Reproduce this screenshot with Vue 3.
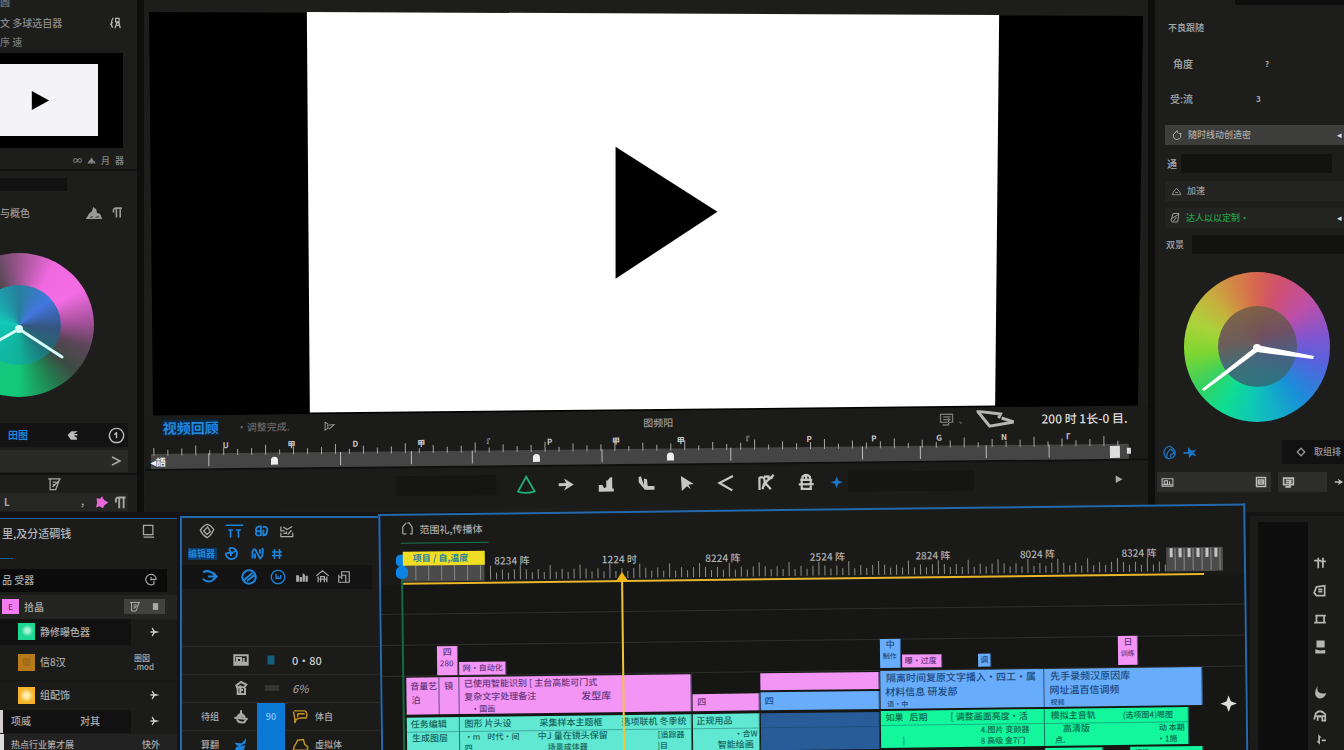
<script setup>
import { h, ref } from 'vue'

const shapes = {
  play: ['f', 'M4 2 L22 12 L4 22Z'],
  tri: ['s', 'M12 3 L21 19 Q12 22 3 19Z'],
  mount: ['f', 'M1 20 L6 12 L9 10 L11 4 L15 7 L16 12 L20 13 L23 20Z M6 18h4v-2z M13 18h5v-2z'],
  para: ['s', 'M5 12 Q3 4 9 4 H20 M10 4V21 M17 4V21'],
  person: ['s', 'M9 3 Q3 12 8 20 M8 11 L4 15 M13 4h6v6h-6z M12 21 L15 12 H19 L21 21 M15 16h4'],
  hand: ['f', 'M3 11 L10 4 H22 L14 9 H21 V12 H14 L20 16 V20 H9Z'],
  clock: ['s', 'M12 2a10 10 0 1 0 .1 0 M12 7v9 M12 8l-3 3'],
  chev: ['s', 'M4 4 L20 12 L4 20'],
  fork: ['f', 'M6 1L11 9L23 12L11 15L6 23L4 20L8 14H1V10H8L4 4Z'],
  less: ['s', 'M21 3 L3 12 L20 22'],
  note: ['s', 'M2 3H22 M5 3V20H14L20 4 M9 8l6 0 M9 12h5 M9 16l9-9'],
  splat: ['f', 'M4 5 L10 6 L13 2 L16 8 L23 12 L17 16 L14 21 L9 18 L3 20 L5 13Z'],
  monitor: ['s', 'M4 2H19V17H4Z M4 21H21'],
  lens: ['s', 'M18 18A9 9 0 1 1 21 11 M12 11H21 M12 7v6 M17 13v5'],
  diamond: ['s', 'M12 2 Q18 3 22 10 Q18 19 12 22 Q5 18 2 11 Q6 4 12 2Z M13 6L17 13L12 17L7 12Z'],
  tt: ['s', 'M1 4H23 M7 10V20 M4 10h6 M17 10V20 M14 10h6'],
  magnet: ['s', 'M3 11Q3 3 11 4V19 M10 12Q4 9 3 15Q3 19 9 18 M14 5Q23 3 21 12 Q20 18 15 18 V9'],
  graph: ['s', 'M3 4V11H9 M3 14V20H22V14 M7 5L13 9L21 4 M7 15h4 M14 17L20 10 M12 12v4'],
  swirl: ['s', 'M8 4A9 9 0 1 1 3 11 M8 5L12 12L18 8 M4 11h7v5'],
  wave: ['s', 'M4 20V9Q7 1 11 10L16 20Q22 16 20 3 M16 5V12 M8 12V20'],
  hash: ['s', 'M7 2V22 M17 2V22 M2 8H22 M2 15H22'],
  loop: ['s', 'M3 6Q9 3 14 6Q21 8 20 12 Q18 18 12 19 Q5 19 3 15 M10 12H21 M17 8l5 4-5 5'],
  slash: ['s', 'M12 2a10 10 0 1 0 .1 0 M5 16L17 6 M9 18L20 9'],
  clip: ['s', 'M12 2a10 10 0 1 0 .1 0 M9 7V14H16V9 M12 10v5'],
  bars: ['f', 'M2 9H7V20H2Z M8 12H12V20H8Z M13 5L17 8V20H13Z M18 10H22V20H18Z'],
  house: ['s', 'M2 11L12 3L22 11 M5 12V21 M19 12V21 M9 21V12H15V21 M7 16H18'],
  frame: ['s', 'M3 8V21H21V3H8V16 M8 9H15V21 M3 12h5'],
  folder: ['s', 'M2 5H22V19H2Z M6 9H12V15H6Z M16 9V15 M2 16H22'],
  film: ['f', 'M5 3H19V21H5Z'],
  cube: ['s', 'M5 8L12 3L20 7L17 11H6Z M7 12V21H18V12 M10 15h5 M11 8V21'],
  bot: ['s', 'M12 2V7 M6 13Q12 2 18 13 M2 13L22 15 M6 15Q7 21 17 20L20 15 M9 11h6'],
  blade: ['f', 'M2 9L14 10L21 2L20 10L9 16Z M5 16L20 13L17 21L3 22Z'],
  bubble: ['s', 'M3 4H18Q23 6 20 14H12L6 16L4 21V15L2 5 M8 8h10 M8 8v5'],
  cap: ['s', 'M2 20H22V15L18 12L16 5L8 6L5 12L3 15Z'],
  doc: ['s', 'M4 21V9L10 2 M12 2H15L20 9V21H16 M4 21H10'],
  arrow: ['f', 'M2 10H12L9 4L22 12L9 20L12 14H2Z'],
  steps: ['f', 'M2 13H7L9 17L12 16V7H14L17 3H20V18H22V22H2Z'],
  edge: ['f', 'M2 3L5 2L9 14L9 5L13 6L14 15H23V20H10L2 10Z'],
  cursor: ['f', 'M5 2L22 13L15 14L18 20L13 16L6 22Z'],
  cut: ['s', 'M3 5V22 M3 5H8 M9 4L10 13L22 2 M9 4H15V8 M9 13L7 21 M11 13L18 21 M9 17Q12 8 21 5'],
  lock: ['s', 'M7 9V5Q12 0 17 5V9 M4 9H20 M6 9V21H18V9 M2 15H22 M12 4V9'],
  spark: ['f', 'M12 1L15 9L23 12L15 15L12 23L9 15L1 12L9 9Z'],
  flag: ['s', 'M3 4V20L9 16L8 10L21 9L11 18 M3 4L9 8'],
  stack: ['s', 'M3 4H21V16H3Z M7 8H18 M7 12H18 M15 8V20H6'],
  pot: ['s', 'M5 10Q3 20 12 21Q22 19 19 10 M6 10L12 3L13 8 M15 9h6'],
  bell: ['s', 'M3 19H21L19 13L12 5L5 13Z M9 14h6'],
  disk: ['s', 'M8 3H20L17 20H6Q2 16 6 11Z M5 13L19 5 M9 18L15 10'],
  drop: ['s', 'M13 2Q4 3 3 12Q4 22 12 22Q22 20 21 11Q18 4 13 2Z M8 20Q6 12 15 6 M14 6L20 13L14 15V20'],
  star: ['f', 'M1 11H8L8 3L14 9L22 7L17 12L22 18L14 16L10 21L9 14H1Z'],
  square: ['s', 'M3 3H21V21H3Z M7 8H17V16H7Z M7 12H17'],
  pen: ['s', 'M2 8H14 M9 3V21 M17 3V20 M13 9H22'],
  box: ['s', 'M6 5L20 3V20H6L2 15Z M9 9H16 M9 13H16'],
  rail: ['s', 'M4 6H22 M2 18H22 M19 6V18 M6 6V18'],
  block: ['f', 'M6 1H20V13H6Z M4 16L12 18L21 17V23H4Z'],
  moon: ['f', 'M8 1Q4 17 23 14Q19 23 11 23Q-2 19 8 1Z'],
  ghost: ['s', 'M2 18L5 7Q13 0 21 9V20H16V13H8V20 M5 12H21'],
  sort: ['f', 'M9 2L15 8H12V20L6 14H9Z M15 11H22V14H15Z'],
  rhomb: ['s', 'M12 3L21 12L12 21L3 12Z'],
  nib: ['s', 'M22 8L24 4L1 1L13 16L37 12L25 8'],
}
const Icon = (p) => {
  const [k, d] = shapes[p.n]
  const nib = p.n === 'nib'
  return h('svg', {
    viewBox: nib ? '0 0 39 18' : '0 0 24 24', width: p.w || 14, height: nib ? 18 : p.w || 14, 'aria-hidden': 'true',
    fill: k === 'f' ? 'currentColor' : 'none', 'fill-rule': 'evenodd', stroke: k === 's' ? 'currentColor' : 'none',
    'stroke-width': p.sw || 2,
  }, [h('path', { d })])
}
Icon.props = ['n', 'w', 'sw']

const query = ref('品 受器')
const pct = (v, total) => (v / total) * 100 + '%'

const W = 867
const labels = [
  [114, '8234 阵'], [222, '1224 时'], [326, '8224 阵'], [431, '2524 阵'], [537, '2824 阵'], [642, '8024 阵'], [744, '8324 阵'],
]
const ticks = []
for (let i = 0; i < 114; i++) ticks.push({ x: 110 + i * 6, l: i % 5 === 0 ? 14 : i % 2 ? 7 : 10 })

const clips = [
  { x: 55, w: 21, y: 62, h: 29, c: 'pink', t: [[6, 1, '四', 9], [3, 12, '280', 8]] },
  { x: 77, w: 48, y: 78, h: 13, c: 'pink', t: [[4, 1, '网·自动化', 8]] },
  { x: 500, w: 21, y: 60, h: 29, c: 'blue', t: [[6, 1, '中'], [3, 12, '制作', 7]] },
  { x: 522, w: 41, y: 76, h: 13, c: 'pink', t: [[3, 1, '曝·过度', 8]] },
  { x: 599, w: 13, y: 76, h: 13, c: 'blue', t: [[2, 1, '调', 8]] },
  { x: 739, w: 21, y: 60, h: 29, c: 'pink', t: [[6, 1, '日'], [3, 12, '训练', 7]] },
  { x: 24, w: 33, y: 93, h: 37, c: 'pink', t: [[4, 4, '音量艺'], [5, 18, '泊']] },
  { x: 57, w: 20, y: 93, h: 37, c: 'pink', t: [[5, 4, '镜']] },
  { x: 77, w: 233, y: 93, h: 37, c: 'pink', t: [[5, 2, '已使用智能识别 [ 主台高能可门式', 9], [5, 15, '复杂文字处理备注', 9], [122, 15, '发型库', 10], [12, 27, '·国画', 8]] },
  { x: 311, w: 68, y: 113, h: 17, c: 'pink', t: [[5, 3, '四']] },
  { x: 380, w: 119, y: 93, h: 17, c: 'pink', t: [] },
  { x: 380, w: 119, y: 112, h: 18, c: 'blue', t: [[4, 4, '四']] },
  { x: 500, w: 165, y: 92, h: 38, c: 'blue', t: [[6, 2, '隔离时间复原文字播入·四工·属', 10], [5, 16, '材料信息 研发部', 10], [7, 28, '语·中', 7]] },
  { x: 665, w: 159, y: 92, h: 38, c: 'blue', t: [[6, 2, '先手录频汉原因库', 10], [5, 16, '网址温百信调频', 10], [6, 28, '视频', 7]] },
  { x: 24, w: 53, y: 133, h: 38, c: 'cyan', t: [[4, 2, '任务编辑'], [5, 16, '生成图层']] },
  { x: 77, w: 233, y: 133, h: 38, c: 'cyan', t: [[5, 2, '图形 片头设'], [80, 2, '采集样本主题框'], [162, 2, '选项联机 冬季统'], [5, 15, '·m    时代·间', 8], [78, 15, '中J 量在镜头保留', 9], [198, 15, '[追踪器', 8], [5, 26, '四', 8], [88, 26, '场景成体器', 8], [198, 26, '|目', 8]] },
  { x: 311, w: 68, y: 133, h: 38, c: 'cyan', t: [[4, 2, '正规用品'], [42, 15, '·合W', 8], [25, 26, '智能绘画', 9]] },
  { x: 380, w: 119, y: 133, h: 37, c: 'navy', t: [] },
  { x: 500, w: 165, y: 132, h: 37, c: 'green', t: [[5, 2, '如果   后期'], [70, 2, '[ 调整画面亮度·活'], [100, 15, '4.图片 变颜器', 8], [22, 25, '|', 8], [100, 26, '8 高级 金7门', 8]] },
  { x: 665, w: 145, y: 132, h: 37, c: 'green', t: [[6, 2, '模拟主音轨'], [78, 2, '(选项图4)嗯图', 8], [18, 15, '高清版'], [114, 15, '动 本期', 8], [10, 26, '点.', 8], [112, 26, '·1施', 8]] },
  { x: 403, w: 97, y: 171, h: 30, c: 'green', t: [] },
  { x: 665, w: 58, y: 171, h: 30, c: 'green', t: [[5, 0, '项目 —', 7]] },
  { x: 750, w: 74, y: 171, h: 30, c: 'green', t: [[5, 0, '视频', 7]] },
]

const M = 1005
const small = []
for (let i = 0; i < 70; i++) small.push({ x: 4 + i * 14, l: [6, 4, 5, 8, 3][i % 5] })
const marks = ['U', '甲', 'D', '甲', '『', 'P', '甲', '甲', '『', 'P', 'P', 'G', 'N', 'Γ'].map((s, i) => ({ s, x: 78 + i * 65 }))
const majors = [64, 196, 267, 328, 458, 587, 719, 777, 843, 906]
const pins = [126, 389, 523]
const transport = [['tri', '三角标记'], ['arrow', '前进'], ['steps', '音量'], ['edge', '入点'], ['cursor', '播放'], ['less', '后退'], ['cut', '剪切'], ['lock', '锁定']]
const strip = [['pen', 0], ['box', 0], ['rail', 0], ['block', 0], ['moon', 1], ['ghost', 0], ['sort', 0]]
</script>

<template>
  <div class="app">
    <div class="upper">
      <aside class="scope">
        <div class="cut">圆</div>
        <div class="srow top"><span>文 多球选自器</span><button aria-label="人物"><Icon n="person" w="14" /></button></div>
        <div class="sub">序 速</div>
        <div class="thumb"><div class="paper"><Icon n="play" w="23" /></div></div>
        <div class="minis"><span>∞</span><Icon n="mount" w="9" /><span>月</span><span>器</span></div>
        <div class="selrow"><select aria-label="范围"><option></option></select></div>
        <div class="srow tone"><span>与概色</span><span class="pair"><Icon n="mount" w="18" /><Icon n="para" w="13" sw="3" /></span></div>
        <div class="wheelbox"><div class="wheel lw"><div class="core"></div>
          <svg viewBox="0 0 150 144" aria-hidden="true"><path d="M26 104L75 76L118 104" fill="none" stroke="#d8fff8" stroke-width="3" stroke-linecap="round" /><circle cx="75" cy="76" r="4" fill="#d8fff8" /></svg>
        </div></div>
        <div class="tabs"><a href="#">田图</a><button aria-label="手形"><Icon n="hand" w="13" /></button><button aria-label="时间"><Icon n="clock" w="17" /></button></div>
        <div class="more"><button aria-label="展开"><Icon n="chev" w="12" sw="3" /></button></div>
        <div class="noter"><Icon n="note" w="15" /></div>
        <div class="last"><b>L</b><span>，</span><Icon n="splat" w="15" class="mag" /><Icon n="para" w="15" sw="3" /></div>
      </aside>

      <main class="monitor">
        <svg class="screen" viewBox="0 0 1000 404" preserveAspectRatio="none" role="img" aria-label="预览画面">
          <path d="M1 0L996 4L991 395L5 404Z" fill="#000" />
          <path d="M159 0L852 3L848 394L162 401Z" fill="#fff" />
          <path d="M468 135L570 200L468 267Z" fill="#000" />
        </svg>
        <div class="deck">
          <div class="info">
            <div class="il"><strong>视频回顾</strong><span class="dim">·调整完成.</span><Icon n="flag" w="12" class="flag" /></div>
            <span class="mid">图频阳</span>
            <div class="ir"><Icon n="stack" w="16" /><span class="dim">、</span><Icon n="nib" w="39" sw="3" /><time>200 时 1长-0 目.</time></div>
          </div>
          <div class="scrub">
            <svg width="100%" height="30" aria-hidden="true">
              <rect x="6" y="14" width="97.5%" height="15" fill="#454545" />
              <line v-for="t in small" :key="t.x" :x1="pct(t.x + 5, M)" :x2="pct(t.x + 5, M)" :y1="14 - t.l" y2="16" stroke="#a5a5a5" />
              <line v-for="m in majors" :key="m" :x1="pct(m, M)" :x2="pct(m, M)" y1="14" y2="27" stroke="#bbb" />
            </svg>
            <span v-for="m in marks" :key="m.x" class="mk" :style="{ left: pct(m.x, M) }">{{ m.s }}</span>
            <span v-for="p in pins" :key="p" class="pin" :style="{ left: pct(p, M) }"></span>
            <span class="start">◂語</span><span class="end"></span>
          </div>
          <div class="transport">
            <input aria-label="入点时间" class="fa" />
            <button v-for="(t, i) in transport" :key="t[0]" :class="{ on: i === 0 }" :aria-label="t[1]"><Icon :n="t[0]" :w="i ? 18 : 22" :sw="i ? 3 : 2" /></button>
            <button class="add" aria-label="添加"><Icon n="spark" w="13" /></button>
            <input aria-label="出点时间" class="fb" />
            <button class="tail" aria-label="更多"><Icon n="play" w="9" /></button>
          </div>
        </div>
      </main>

      <aside class="props">
        <div class="ptop"></div>
        <h2>不良跟随</h2>
        <div class="kv"><span>角度</span><b>?</b></div>
        <div class="kv k2"><span>受:流</span><b>3</b></div>
        <button class="bar hi"><Icon n="pot" w="12" /><span>随时线动创造密</span><i>◂</i></button>
        <label class="field"><span>通</span><input /></label>
        <button class="bar"><Icon n="bell" w="11" /><span>加速</span></button>
        <button class="bar b3"><Icon n="disk" w="12" /><span class="grn">达人以以定制·</span><i>◂</i></button>
        <label class="field f2"><span>双景</span><input /></label>
        <div class="wheel rw"><div class="core"></div>
          <svg viewBox="0 0 146 150" aria-hidden="true"><path d="M73 73L130 84L129 87L73 80L20 119L18 117L70 76Z" fill="#fff" /><circle cx="73" cy="76" r="4" fill="#fff" /></svg>
        </div>
        <div class="foot"><Icon n="drop" w="15" /><Icon n="star" w="15" /><button><Icon n="rhomb" w="10" sw="3" /><span>取组排</span></button></div>
        <div class="foot2"><button class="g1" aria-label="文件"><Icon n="folder" w="13" /><Icon n="square" w="12" sw="3" /></button><button class="g2" aria-label="图层"><Icon n="stack" w="13" sw="3" /></button><Icon n="arrow" w="10" /></div>
      </aside>
    </div>

    <div class="lower">
      <aside class="effects">
        <div class="eh"><h1>里,及分适碉钱</h1><Icon n="monitor" w="15" /></div>
        <div class="search"><input v-model="query" aria-label="搜索" /><Icon n="lens" w="14" /></div>
        <div class="er group"><i class="sw pk">E</i><span>拾晶</span><span class="btns"><button aria-label="新建"><Icon n="note" w="12" /></button><button aria-label="列表"><Icon n="film" w="9" /></button></span></div>
        <div class="er in dk"><i class="sw gr"></i><span>静修曝色器</span><button aria-label="展开"><Icon n="fork" w="10" /></button></div>
        <div class="er in r3"><i class="sw br">▥</i><span>信8汉</span><small>圈図<br />.mod</small></div>
        <div class="er in"><i class="sw ye"></i><span>组配饰</span><button aria-label="展开"><Icon n="fork" w="10" /></button></div>
        <div class="er flat"><span>项威</span><span class="second">对其</span><button aria-label="展开"><Icon n="fork" w="10" /></button></div>
        <div class="er flat lastrow"><span>热点行业第才展</span><em>快外</em></div>
      </aside>

      <section class="tools">
        <div class="tr t1"><Icon n="diamond" w="16" /><Icon n="tt" w="19" class="bl" /><Icon n="magnet" w="15" sw="3" class="bl" /><Icon n="graph" w="15" /></div>
        <div class="tr t2 bl"><b>编辑器</b><Icon n="swirl" w="15" sw="3" /><Icon n="wave" w="15" sw="3" /><Icon n="hash" w="12" sw="3" /></div>
        <div class="tr t3"><Icon n="loop" w="17" sw="3" class="bl" /><Icon n="slash" w="16" sw="3" class="bl" /><Icon n="clip" w="16" class="bl" /><Icon n="bars" w="14" /><Icon n="house" w="15" /><Icon n="frame" w="14" /></div>
        <div class="blank"></div>
        <div class="track"><span></span><Icon n="folder" w="16" sw="3" /><Icon n="film" w="12" class="teal" /><span class="num">0·80</span></div>
        <div class="track"><span></span><Icon n="cube" w="16" sw="3" /><s></s><i class="num">6%</i></div>
        <div class="track"><span>待组</span><Icon n="bot" w="16" sw="3" /><button class="tg">90</button><Icon n="bubble" w="17" class="yl" /><span>体自</span></div>
        <div class="track"><span>算翻</span><Icon n="blade" w="15" class="bl" /><button class="tg" aria-label="锁定轨道"></button><Icon n="cap" w="17" class="yl" /><span>虚拟体</span></div>
      </section>

      <section class="timeline">
        <div class="th"><a href="#"><Icon n="doc" w="14" /><span>范围礼,传播体</span></a></div>
        <div class="ruler">
          <div class="work">项目 / 自,温度</div>
          <span v-for="l in labels" :key="l[0]" class="lb" :style="{ left: pct(l[0], W) }">{{ l[1] }}</span>
          <svg width="100%" height="31" aria-hidden="true">
            <rect :x="pct(22, W)" y="13" :width="pct(82, W)" height="17" fill="#4b4b4b" />
            <line v-for="n in 6" :key="n" :x1="pct(22 + n * 13, W)" :x2="pct(22 + n * 13, W)" y1="14" y2="29" stroke="#858585" />
            <rect :x="pct(789, W)" y="5" :width="pct(57, W)" height="24" fill="#4b4b4b" />
            <line v-for="t in ticks" :key="t.x" :x1="pct(t.x, W)" :x2="pct(t.x, W)" :y1="29 - t.l" y2="29" stroke="#8b8b8b" />
            <line v-for="n in 6" :key="'a' + n" :x1="pct(789 + n * 9, W)" :x2="pct(789 + n * 9, W)" y1="6" y2="28" stroke="#8b8b8b" />
            <line v-for="n in 6" :key="'e' + n" :x1="pct(785 + n * 9, W)" :x2="pct(785 + n * 9, W)" y1="6" y2="15" stroke="#c5c5c5" stroke-width="3" />
          </svg>
          <div class="gold"></div>
        </div>
        <div class="canvas">
          <div v-for="(c, i) in clips" :key="i" class="clip" :class="c.c" :style="{ left: pct(c.x, W), width: pct(c.w, W), top: c.y + 'px', height: c.h + 'px' }">
            <span v-for="(t, j) in c.t" :key="j" :style="{ left: t[0] + 'px', top: t[1] + 'px', fontSize: (t[3] || 9) + 'px' }">{{ t[2] }}</span>
          </div>
          <div class="begin"></div>
          <div class="head"></div>
          <Icon n="spark" w="18" class="sparkle" />
        </div>
      </section>

      <aside class="strip">
        <div class="meter"></div>
        <div class="icons"><button v-for="s in strip" :key="s[0]" :class="{ gap: s[1] }" :aria-label="s[0]"><Icon :n="s[0]" w="14" sw="3" /></button></div>
      </aside>
    </div>
  </div>
</template>

<style>
html, body { background: #1b1b1a; overflow: hidden; }
</style>

<style scoped>
* { box-sizing: border-box; }
.app { height: 100vh; min-height: 750px; display: flex; flex-direction: column; overflow: hidden; background: #1b1b1a; color: #aaa; font: 500 10px/14px "Noto Sans CJK SC", "Liberation Sans", sans-serif; white-space: nowrap; }
button, input, select { font: inherit; color: inherit; background: none; border: 0; padding: 0; margin: 0; min-width: 0; }
button { display: inline-flex; align-items: center; justify-content: center; }
svg { flex: none; display: block; }
a { color: inherit; text-decoration: none; }
h1, h2 { margin: 0; font-weight: 500; }
i { font-style: normal; }
.bl { color: #1c84dc; }

.upper { flex: 1 0 508px; display: grid; grid-template-columns: 137px minmax(0, 1fr) 189px; column-gap: 7px; background: #0e0e0e; }
.upper > * { background: #1d1d1c; overflow: hidden; }
.scope { display: flex; flex-direction: column; }
.cut { height: 8px; line-height: 4px; color: #777; }
.srow { display: flex; justify-content: space-between; align-items: center; padding-right: 13px; height: 30px; }
.top { color: #8a8a8a; padding-right: 15px; }
.top button { color: #bbb; }
.sub { height: 15px; line-height: 8px; color: #777; }
.thumb { height: 95px; margin-right: 14px; background: #000; padding: 11px 25px 12px 0; }
.paper { height: 100%; background: #f4f4f6; color: #000; display: flex; align-items: center; padding-left: 28px; }
.minis { height: 23px; display: flex; justify-content: flex-end; align-items: center; gap: 5px; padding: 4px 13px 0 0; font-size: 9px; color: #888; border-bottom: 2px solid #111; }
.selrow { height: 26px; padding-top: 7px; }
.selrow select { width: 67px; height: 13px; background: #111; appearance: none; display: block; }
.tone { height: 31px; color: #999; }
.pair { display: flex; gap: 8px; align-items: center; }
.wheelbox { height: 192px; padding-top: 25px; }
.wheel { position: relative; border-radius: 50%; }
.wheel svg { position: absolute; inset: 0; width: 100%; height: 100%; }
.lw { width: 150px; height: 144px; margin-left: -56px; background: conic-gradient(#9c5590 0deg, #f068e0 30deg, #f46de4 60deg, #a4509b 88deg, #5a4556 108deg, #3c4b43 130deg, #237f50 150deg, #12c878 180deg, #14c782 240deg, #209080 290deg, #444 330deg, #9c5590 360deg); }
.core { position: absolute; border-radius: 50%; }
.lw .core { inset: 32px 33px; background: conic-gradient(#277f9d, #4377df 50deg, #355480 95deg, #246673 125deg, #0fb29b 180deg, #12c9b8 280deg, #277f9d); }
.tabs { height: 24px; margin: 3px 9px 0 0; background: #131313; display: grid; grid-template-columns: 58px 42px 1fr; align-items: center; justify-items: start; padding-left: 8px; }
.tabs a { color: #1c84dc; font-weight: 700; }
.tabs button { color: #bbb; }
.more { height: 22px; margin: 3px 9px 0 0; background: #292928; display: flex; justify-content: flex-end; padding-right: 6px; }
.noter { height: 20px; border-top: 2px solid #101010; padding: 2px 0 0 47px; margin-top: 1px; }
.last { height: 18px; background: #262625; display: flex; align-items: center; gap: 4px; margin: 0 9px 0 0; padding-left: 4px; }
.last span { margin-left: auto; }
.mag { color: #e868da; }

.monitor { display: flex; flex-direction: column; padding-top: 12px; }
.screen { flex: 1; width: calc(100% - 5px); min-height: 0; margin-left: 4px; }
.deck { height: 96px; transform: rotate(-.6deg); transform-origin: left center; background: #1b1b1a; margin: 0 0 0 1px; }
.info { height: 24px; display: grid; grid-template-columns: 1fr auto 1fr; align-items: center; padding: 0 20px 0 18px; }
.il, .ir { display: flex; align-items: center; gap: 18px; }
.il strong { color: #2588dc; font-size: 14px; background: #0b2944; line-height: 16px; }
.dim { color: #666; }
.il .flag { margin-left: 16px; color: #999; }
.mid { color: #999; padding-left: 26px; }
.ir { justify-content: flex-end; gap: 4px; color: #b5b5b5; }
.ir svg:first-child { color: #777; }
.ir .dim { width: 14px; }
.ir time { color: #ddd; font-size: 12px; font-weight: 500; margin-left: 22px; }
.scrub { height: 31px; position: relative; border-bottom: 2px solid #101010; }
.mk { position: absolute; top: 1px; font-size: 8px; line-height: 10px; color: #ccc; font-weight: 700; }
.pin { position: absolute; top: 18px; width: 7px; height: 8px; border-radius: 4px 4px 0 0; background: #eee; }
.start { position: absolute; left: 6px; top: 15px; color: #eee; font-weight: 700; }
.end { position: absolute; right: 28px; top: 16px; width: 10px; height: 12px; background: #ddd; box-shadow: 14px -1px 0 -3px #ddd; }
.transport { height: 36px; display: flex; align-items: center; padding-left: 25%; color: #c6c6c6; }
.transport input { background: #151514; height: 20px; }
.fa { width: 100px; margin-right: 10px; }
.transport button { width: 40px; }
.transport .on { color: #1cae72; }
.transport .add { width: 22px; color: #1c74c4; }
.fb { width: 126px; }
.transport .tail { margin-left: auto; margin-right: 10px; color: #aaa; }

.props { display: flex; flex-direction: column; padding-left: 10px; }
.ptop { height: 5px; margin-left: 70px; background: #0e0e0e; }
h2 { font-size: 9px; height: 42px; line-height: 46px; padding-left: 3px; }
.kv { display: grid; grid-template-columns: 92px 1fr; height: 34px; align-items: center; padding-left: 8px; }
.k2 { grid-template-columns: 86px 1fr; padding-left: 5px; height: 35px; }
.kv b { font-size: 8px; }
.bar { height: 20px; background: #232322; justify-content: flex-start; padding: 0 2px 0 6px; gap: 5px; font-size: 9px; margin-bottom: 7px; color: #999; }
.bar i { margin-left: auto; color: #ddd; }
.hi { background: #3d3d3c; margin-top: 9px; margin-bottom: 9px; color: #aaa; }
.grn { color: #22a045; }
.b3 { padding-left: 4px; }
.field { display: flex; height: 19px; gap: 4px; padding-left: 2px; margin-bottom: 8px; align-items: center; }
.field input { flex: 1; height: 19px; background: #121211; margin-right: 12px; }
.f2 { font-size: 9px; gap: 8px; padding-left: 1px; margin-bottom: 18px; }
.f2 input { margin-right: 0; }
.rw { width: 146px; height: 150px; flex: none; margin-left: 19px; background: conic-gradient(#d66550, #cf5070 20deg, #bd4fa7 50deg, #8055d0 80deg, #5563dd 105deg, #198fd8 140deg, #0ec4ba 180deg, #0fde91 210deg, #36d161 235deg, #80d62f 265deg, #a9d33a 290deg, #c5b33e 315deg, #d48545 340deg, #d66550); }
.rw .core { inset: 34px 33px 35px 34px; background: linear-gradient(170deg, #77623f, #67505d 40%, #48607a 65%, #277276); opacity: .9; }
.foot { height: 24px; margin-top: 18px; display: flex; align-items: center; gap: 6px; color: #1c74c4; }
.foot svg:first-child { margin-left: -3px; }
.foot button { margin-left: auto; width: 62px; height: 24px; background: #111; color: #999; gap: 8px; justify-content: flex-start; padding-left: 14px; font-size: 9px; }
.foot button svg:first-child { margin-left: 0; }
.foot2 { margin: 8px 0 0 -8px; height: 20px; display: flex; align-items: center; gap: 7px; color: #bbb; }
.foot2 button { height: 20px; background: #2d2d2c; justify-content: space-between; padding: 0 4px; }
.g1 { flex: 1; } .g2 { width: 49px; }

.lower { flex: none; height: 242px; display: grid; grid-template-columns: 177px 197px minmax(0, 1fr) 94px; column-gap: 3px; position: relative; background: #141414; padding-top: 4px; }
.effects { border-top: 1px solid #28609c; background: #1b1b1a; margin-top: 2px; overflow: hidden; }
.eh { height: 50px; display: flex; justify-content: space-between; padding: 5px 21px 0 2px; background: linear-gradient(#1d5b93, #1d5b93) 0 39px / 13px 1px no-repeat; }
h1 { font-size: 11px; line-height: 18px; color: #b5b5b5; }
.search { height: 23px; background: #0b0b0b; display: flex; align-items: center; margin-right: 10px; padding-right: 9px; justify-content: space-between; }
.search input { width: 120px; padding-left: 2px; }
.er { display: flex; align-items: center; height: 29px; gap: 5px; padding: 0 17px 0 2px; }
.er > button { margin-left: auto; color: #ccc; }
.group { height: 24px; margin-top: 3px; background: #242423; padding-right: 12px; }
.btns { margin-left: auto; background: #414140; display: flex; gap: 10px; height: 15px; width: 41px; justify-content: center; }
.in { padding-left: 18px; }
.dk { height: 26px; background: linear-gradient(#111, #111) 0 0 / 131px 26px no-repeat; }
.r3 { height: 36px; border-bottom: 1px solid #151515; }
.r3 small { margin-left: auto; font-size: 8px; line-height: 9px; padding-right: 6px; }
.sw { width: 17px; height: 17px; display: flex; align-items: center; justify-content: center; font-size: 8px; color: #8a2c90; }
.pk { background: #f27cf0; height: 15px; width: 17px; } .gr { background: radial-gradient(circle at 55% 45%, #a5f5d5 2px, #1dd795 6px); } .br { background: #b67a1b; color: #6a4308; } .ye { background: radial-gradient(circle at 50% 50%, #fff0b0 2px, #f4b32b 7px); }
.flat { height: 23px; padding-left: 11px; background: linear-gradient(#111, #111) 0 0 / 131px 23px no-repeat; box-shadow: inset 3px 0 #d5cdcd; }
.second { margin-left: 44px; }
.lastrow { background: #222; box-shadow: inset 4px 0 #ddd; margin-top: 1px; font-size: 9px; height: 22px; }
em { margin-left: auto; font-style: normal; }

.tools { border: 2px solid #2468ad; border-right: 0; border-bottom: 0; background: #1b1b1a; margin-right: -3px; overflow: hidden; }
.tr { display: grid; align-items: center; height: 22px; }
.t1 { grid-template-columns: 26px 29px 25px 20px; padding: 2px 0 0 17px; height: 25px; }
.t2 { grid-template-columns: 36px 26px 21px 20px; padding-left: 6px; }
.t2 b { background: #0c3a66; width: 29px; font-size: 9px; line-height: 12px; }
.t3 { grid-template-columns: 40px 29px 25px 20px 22px 20px; padding-left: 19px; height: 24px; background: #131313; margin-right: 8px; }
.blank { height: 58px; border-bottom: 1px solid #282827; }
.track { display: grid; grid-template-columns: 32px 24px 31px 27px 1fr; align-items: center; height: 28px; padding-left: 19px; border-bottom: 1px solid #282827; font-size: 9px; }
.track .num { grid-column: 4 / 6; font-size: 11px; color: #ccc; padding-left: 4px; }
.track i.num { font-style: italic; color: #999; }
.track svg + svg.teal { color: #155f7c; margin-left: 8px; }
.track s { width: 14px; height: 6px; background: #333; margin-left: 8px; }
.tg { background: #0a78d4; height: 28px; width: 28px; color: #8cc8ff; font-size: 9px; }
.yl { color: #c89420; margin-left: 4px; }

.timeline { border: 2px solid #2468ad; border-bottom: 0; background: #1a1a19; height: 284px; transform: rotate(-.7deg); transform-origin: left center; margin-top: -2px; overflow: hidden; }
.th { height: 36px; padding: 6px 0 0 20px; }
.th a { display: inline-flex; gap: 5px; height: 22px; padding-right: 6px; border-bottom: 1px solid #15794e; align-items: flex-start; line-height: 15px; }
.ruler { height: 34px; position: relative; }
.ruler svg { width: 100%; }
.work { position: absolute; left: 22px; top: 0; width: 82px; height: 14px; background: #f2dd25; color: #2684a0; font-weight: 700; padding-left: 10px; font-size: 9px; line-height: 14px; overflow: hidden; z-index: 1; }
.lb { position: absolute; top: 4px; color: #b0b0b0; line-height: 12px; }
.gold { position: absolute; left: 22px; width: 92.8%; bottom: 0; height: 3px; background: #e9b62b; }
.canvas { position: relative; height: 212px; margin-top: -1px; background: linear-gradient(#2d2d2c, #2d2d2c) 0 29px / 100% 1px no-repeat, linear-gradient(#2d2d2c, #2d2d2c) 0 60px / 100% 1px no-repeat, linear-gradient(#2d2d2c, #2d2d2c) 0 91px / 100% 1px no-repeat, #161615; }
.clip { position: absolute; border-right: 1px solid rgba(20, 30, 60, .6); color: #6a3580; }
.clip span { position: absolute; line-height: 10px; font-weight: 500; white-space: pre; }
.pink { background: #f295f5; } .blue { background: #68adfb; color: #1d4a80; } .cyan { background: #60e8d2; color: #14665e; } .navy { background: #285c98; } .green { background: #14f69c; color: #0a6b4d; }
.cyan, .green, .navy { background-image: linear-gradient(rgba(0, 60, 70, .35), rgba(0, 60, 70, .35)); background-size: 100% 1px; background-position: 0 14px; background-repeat: no-repeat; }
.begin { position: absolute; left: 20px; top: -30px; bottom: 0; width: 2px; background: #126b3c; }
.begin::before { content: ""; position: absolute; left: -5px; top: 0; width: 12px; height: 24px; background: radial-gradient(circle at 6px 6px, #0a84e4 6px, transparent 7px), radial-gradient(circle at 6px 18px, #0a84e4 6px, transparent 7px); }
.head { position: absolute; left: 27.8%; top: -8px; bottom: 0; width: 2px; background: #f0c437; }
.head::before { content: ""; position: absolute; left: -5px; top: -2px; border: 6px solid transparent; border-top: 0; border-bottom: 9px solid #f0b810; }
.sparkle { position: absolute; right: 8px; top: 120px; color: #ddd; }

.strip { display: grid; grid-template-columns: 50px 1fr; padding: 6px 0 0 8px; background: #1b1b1a; }
.meter { background: #0d0d0d; }
.icons { display: flex; flex-direction: column; align-items: flex-start; padding: 34px 0 0 5px; gap: 14px; color: #b5b5b5; }
.icons .gap { margin-top: 21px; }
.icons button:nth-child(n+4) { margin-bottom: -4px; }
</style>
